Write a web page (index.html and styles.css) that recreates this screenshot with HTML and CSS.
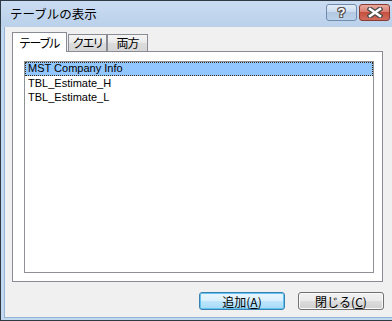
FILE: index.html
```html
<!DOCTYPE html>
<html lang="ja">
<head>
<meta charset="utf-8">
<title>テーブルの表示</title>
<link rel="stylesheet" href="styles.css">
</head>
<body>
<div class="window">
  <div class="titlebar">
    <span class="title">テーブルの表示</span>
    <div class="caption-btns">
      <div class="cbtn help"><span class="qmark">?</span></div>
      <div class="cbtn close">
        <svg width="16" height="11" viewBox="0 0 16 11">
          <path d="M3 2 L13 9 M13 2 L3 9" stroke="#4a4a4a" stroke-width="5" stroke-linecap="square"/>
          <path d="M3 2 L13 9 M13 2 L3 9" stroke="#ffffff" stroke-width="2.6" stroke-linecap="square"/>
        </svg>
      </div>
    </div>
  </div>
  <div class="frame">
    <div class="client">
      <div class="tabs">
        <div class="tab active">テーブル</div>
        <div class="tab t-query">クエリ</div>
        <div class="tab t-both">両方</div>
      </div>
      <div class="panel">
        <div class="listbox">
          <div class="item selected">MST Company Info</div>
          <div class="item">TBL_Estimate_H</div>
          <div class="item">TBL_Estimate_L</div>
        </div>
      </div>
      <div class="buttons">
        <button class="btn default">追加(<u>A</u>)</button>
        <button class="btn">閉じる(<u>C</u>)</button>
      </div>
    </div>
  </div>
</div>
</body>
</html>
```
FILE: styles.css
```css
html, body {
  margin: 0;
  padding: 0;
}
body {
  width: 392px;
  height: 321px;
  overflow: hidden;
  background: #f0f0f0;
  font-family: "Noto Sans CJK JP", "Liberation Sans", sans-serif;
  color: #000;
}
.window {
  width: 392px;
  height: 321px;
  box-sizing: border-box;
  border: 1px solid #2f3a45;
  border-right: none;
  display: flex;
  flex-direction: column;
}
.titlebar {
  height: 26px;
  flex: none;
  background: linear-gradient(#cadcf1, #bad1ea);
  display: flex;
  align-items: flex-start;
}
.title {
  padding-left: 9px;
  font-size: 12.5px;
  line-height: 26px;
}
.caption-btns {
  margin-left: auto;
  margin-top: 3px;
  margin-right: 2px;
  display: flex;
  gap: 2px;
}
.cbtn {
  width: 31px;
  height: 17px;
  box-sizing: border-box;
  border-radius: 3px;
  display: flex;
  align-items: center;
  justify-content: center;
}
.help {
  border: 1px solid #6f8cae;
  background: linear-gradient(#e3edf8, #c9daee 50%, #b3c9e3 50%, #bcd2ea);
}
.qmark {
  font-family: "Liberation Sans", sans-serif;
  font-weight: bold;
  font-size: 13px;
  line-height: 13px;
  color: #fff;
  text-shadow: 1px 0 #555, -1px 0 #555, 0 1px #555, 0 -1px #555, 1px 1px #555, -1px -1px #555, 1px -1px #555, -1px 1px #555;
}
.close {
  border: 1px solid #8a3a31;
  background: linear-gradient(#e9aa9f, #d77a6c 50%, #c5503f 50%, #d16c5c);
}
.frame {
  flex: 1;
  display: flex;
  background: #c2d8ee;
  padding: 0 0 2px 3px;
}
.client {
  flex: 1;
  display: flex;
  flex-direction: column;
  background: #f0f0f0;
  border-left: 1px solid #93b5d8;
  border-bottom: 1px solid #93b5d8;
  padding: 5px 8px 0 7px;
}
.tabs {
  height: 19px;
  display: flex;
  align-items: flex-end;
  flex: none;
}
.tab {
  box-sizing: border-box;
  height: 17px;
  border: 1px solid #898c95;
  border-bottom: none;
  background: linear-gradient(#f5f5f5, #e8e8e8 50%, #dcdcdc 50%, #d6d6d6);
  font-size: 12px;
  line-height: 16px;
  letter-spacing: -1px;
  font-feature-settings: "palt";
  text-align: center;
  white-space: nowrap;
}
.tab.active {
  width: 55px;
  height: 20px;
  margin-bottom: -1px;
  position: relative;
  z-index: 1;
  background: #fff;
  line-height: 19px;
}
.t-query {
  width: 39px;
  margin-left: 1px;
}
.t-both {
  width: 41px;
}
.panel {
  width: 371px;
  height: 231px;
  box-sizing: border-box;
  border: 1px solid #898c95;
  background: #fff;
  padding: 9px 8px 8px 11px;
  display: flex;
  flex-direction: column;
  flex: none;
}
.listbox {
  flex: 1;
  border: 1px solid #8e9196;
  background: #fff;
}
.item {
  height: 14px;
  box-sizing: border-box;
  padding-left: 3px;
  font-family: "Liberation Sans", sans-serif;
  font-size: 11px;
  line-height: 14px;
  white-space: nowrap;
}
.item.selected {
  background: #92c6ff;
  outline: 1px dotted #3a2a1a;
  outline-offset: -1px;
  line-height: 13px;
  height: 14px;
}
.buttons {
  margin-top: 10px;
  display: flex;
  justify-content: flex-end;
  gap: 13px;
}
.btn {
  width: 86px;
  height: 18px;
  box-sizing: border-box;
  padding: 0;
  border: 1px solid #707070;
  border-radius: 3px;
  background: linear-gradient(#f2f2f2, #ebebeb 50%, #dddddd 50%, #cfcfcf);
  box-shadow: inset 0 0 0 1px #fbfbfb;
  font-family: "Noto Sans CJK JP", sans-serif;
  font-size: 12px;
  line-height: 15px;
  color: #000;
}
.btn.default {
  border-color: #3c7fb1;
  background: linear-gradient(#eaf6fd, #d9f0fc 50%, #bee6fd 50%, #a7d9f5);
  box-shadow: inset 0 0 0 1px #5ec4f1;
}
.btn u {
  text-decoration-thickness: 1px;
  text-underline-offset: 1px;
}
```
